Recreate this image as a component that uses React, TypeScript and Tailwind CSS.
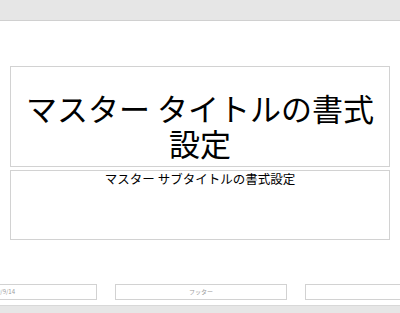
import React from "react";

const font = { fontFamily: '"Noto Sans CJK JP", "Noto Sans", sans-serif' };

export default function App() {
  return (
    <div
      className="w-[400px] h-[313px] overflow-hidden flex flex-col bg-[#e6e6e6]"
      style={font}
    >
      <div className="h-[21px] shrink-0 bg-[#e6e6e6] border-b border-[#d0d0d0]" />
      <div className="h-[284px] shrink-0 bg-white flex flex-col">
        <div className="px-[10px] flex flex-col">
          <div className="mt-[45px] h-[101px] border border-[#d2d2d2] flex flex-col justify-end items-center pb-[6px]">
            <div className="text-[31px] leading-[35px] text-black text-center whitespace-nowrap">
              マスター タイトルの書式
            </div>
            <div className="text-[31px] leading-[35px] text-black text-center">設定</div>
          </div>
          <div className="mt-[3px] h-[70px] border border-[#d2d2d2] flex flex-col items-center">
            <div className="text-[12.5px] leading-[14px] mt-[1px] text-black whitespace-nowrap">
              マスター サブタイトルの書式設定
            </div>
          </div>
        </div>
        <div className="mt-[44px] h-[16px] flex">
          <div className="shrink-0 ml-[-16px] w-[113px] h-full border border-[#d2d2d2] flex items-center px-[2px] overflow-hidden">
            <span className="text-[6px] leading-[8px] text-[#9a9a9a] whitespace-nowrap">2019/9/14</span>
          </div>
          <div className="shrink-0 ml-[18px] w-[172px] h-full border border-[#d2d2d2] flex items-center justify-center">
            <span className="text-[6px] leading-[8px] text-[#9a9a9a] whitespace-nowrap">フッター</span>
          </div>
          <div className="shrink-0 ml-[18px] w-[120px] h-full border border-[#d2d2d2]" />
        </div>
      </div>
      <div className="flex-1 bg-[#e6e6e6] border-t border-[#d8d8d8]" />
    </div>
  );
}
